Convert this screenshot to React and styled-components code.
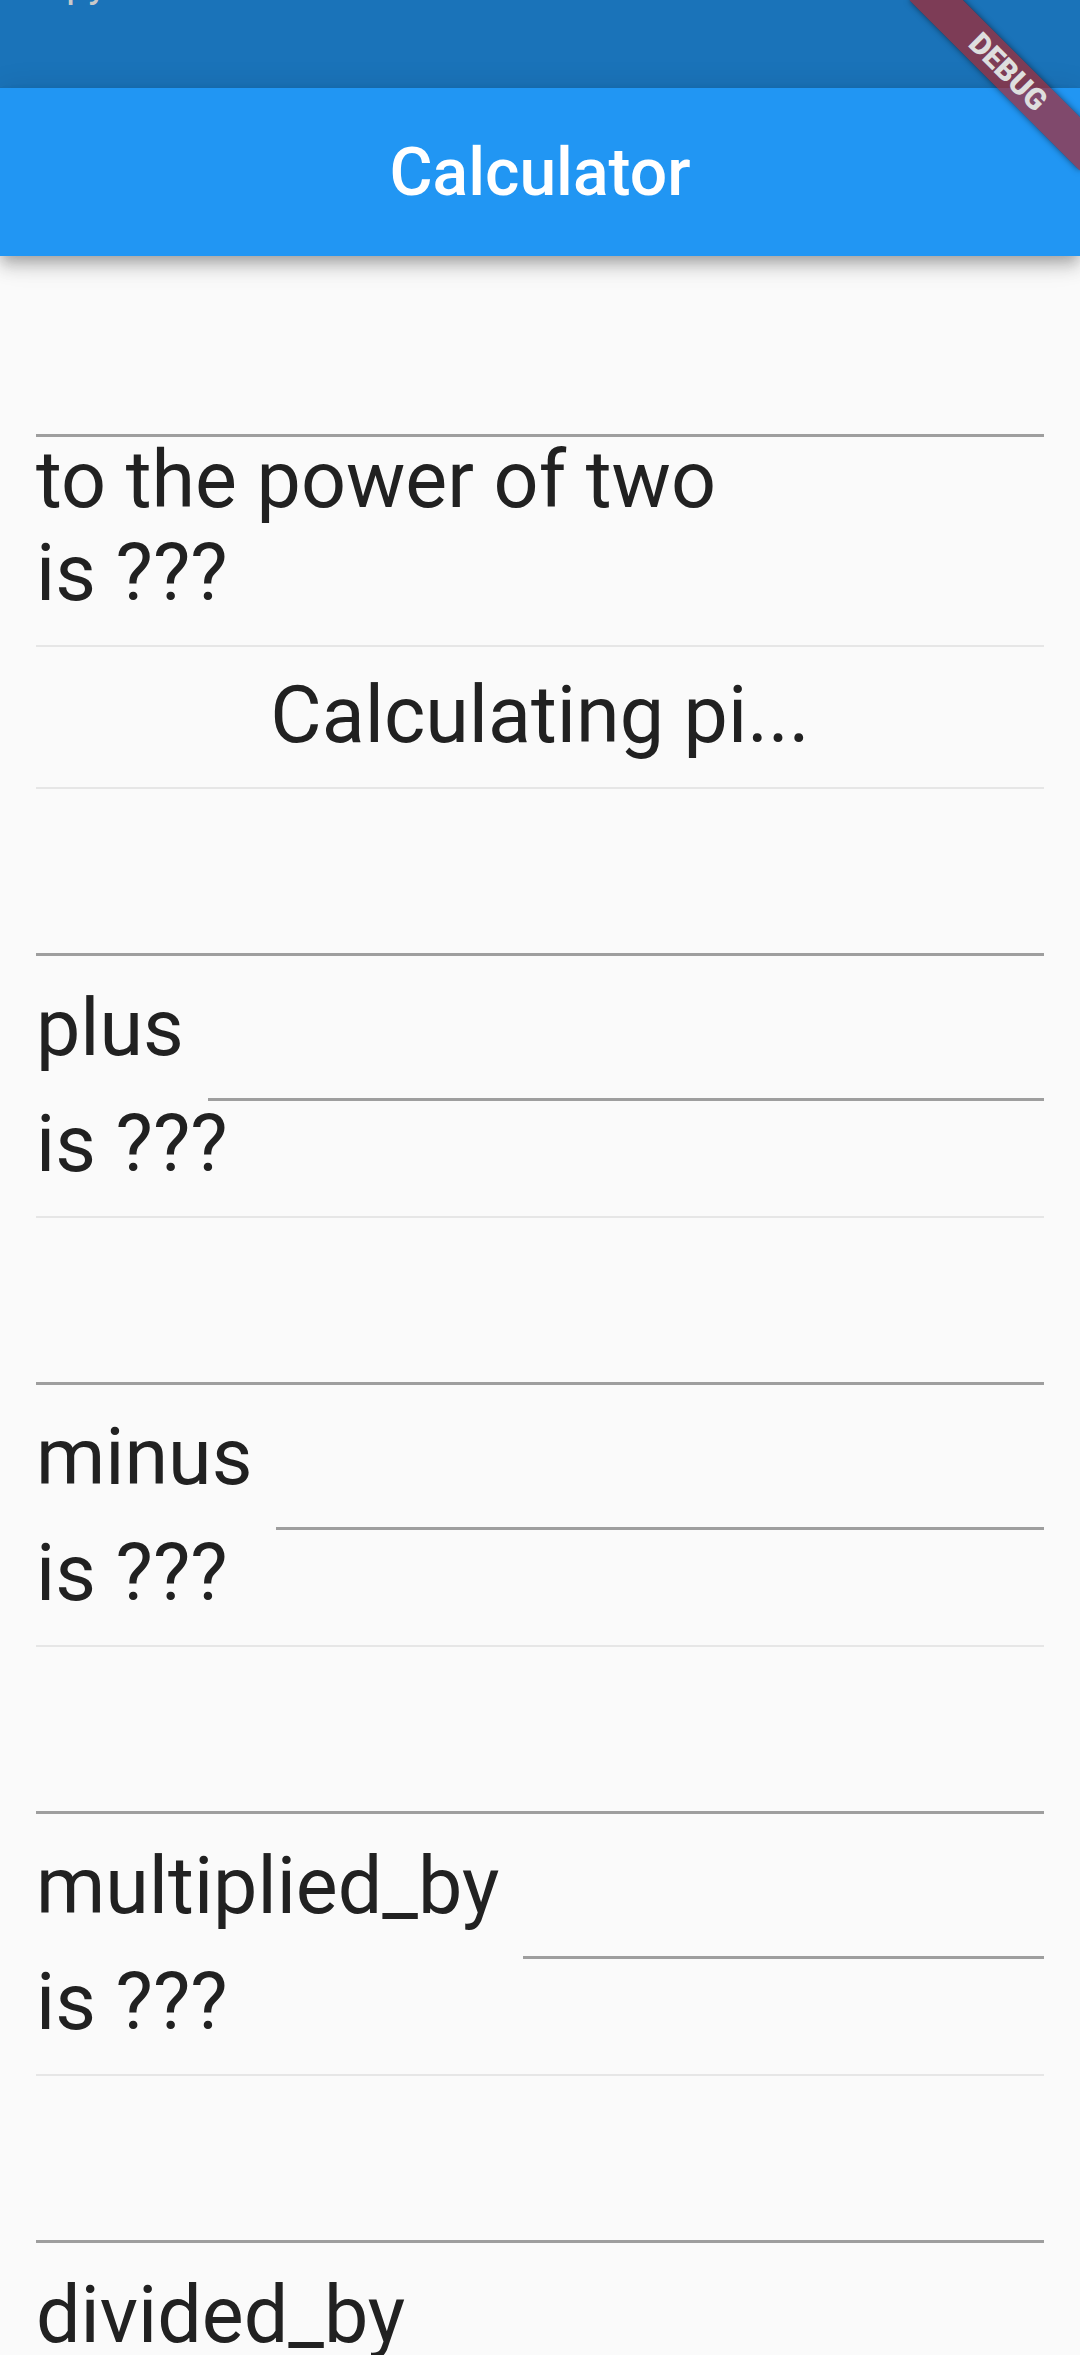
import React from "react";
import styled, { createGlobalStyle } from "styled-components";

const GlobalStyle = createGlobalStyle`
  html, body {
    margin: 0;
    padding: 0;
    background: #fafafa;
  }
  body {
    font-family: Roboto, "Noto Sans", "Liberation Sans", sans-serif;
    -webkit-font-smoothing: antialiased;
  }
`;

const Screen = styled.div`
  position: relative;
  width: 1080px;
  height: 2355px;
  overflow: hidden;
  background: #fafafa;
  display: flex;
  flex-direction: column;
`;

const StatusBar = styled.div`
  flex: none;
  height: 88px;
  background: #1a73b9;
  display: flex;
  align-items: flex-start;
  padding-left: 66px;
  overflow: hidden;
`;

const StatusText = styled.span`
  font: 400 40px/40px Roboto, sans-serif;
  color: #c9c9c9;
  margin-top: -36px;
`;

const AppBar = styled.header`
  flex: none;
  position: relative;
  z-index: 1;
  height: 168px;
  background: #2196f3;
  display: flex;
  align-items: center;
  justify-content: center;
  box-shadow: 0 6px 12px -3px rgba(0, 0, 0, 0.2),
    0 12px 15px 0 rgba(0, 0, 0, 0.14), 0 3px 30px 0 rgba(0, 0, 0, 0.12);
`;

const Title = styled.h1`
  margin: 0;
  font: 500 66px Roboto, sans-serif;
  color: #ffffff;
`;

const Body = styled.main`
  flex: none;
  padding: 36px 36px 0;
  display: flex;
  flex-direction: column;
`;

const Field = styled.div`
  flex: ${(p) => (p.$grow ? "1 1 auto" : "none")};
  height: 145px;
  box-shadow: inset 0 -3px 0 #9e9e9e;
`;

const Label = styled.div`
  flex: none;
  font-size: 79px;
  line-height: 93px;
  font-weight: 400;
  color: #212121;
  white-space: nowrap;
  text-align: ${(p) => (p.$center ? "center" : "left")};
  margin-top: ${(p) => (p.$afterField ? "-3px" : "0")};
`;

const OperandRow = styled.div`
  display: flex;
  align-items: center;
  gap: 24px;
`;

const Divider = styled.div`
  flex: none;
  height: 2px;
  margin: 25px 0 22px;
  background: #e6e6e6;
`;

const Banner = styled.div`
  position: absolute;
  z-index: 5;
  left: 888px;
  top: 53px;
  width: 240px;
  height: 38px;
  transform: rotate(45deg);
  background: rgba(183, 28, 28, 0.63);
  box-shadow: 0 0 6px rgba(0, 0, 0, 0.5);
  display: flex;
  align-items: center;
  justify-content: center;
`;

const BannerText = styled.span`
  font: 900 30px/1 Roboto, sans-serif;
  color: #dedede;
`;

const operations = ["plus", "minus", "multiplied_by", "divided_by"];

function BinaryOperation({ name }) {
  return (
    <>
      <Field />
      <OperandRow>
        <Label>{name}</Label>
        <Field $grow />
      </OperandRow>
      <Label $afterField>is ???</Label>
      <Divider />
    </>
  );
}

export default function App() {
  return (
    <>
      <GlobalStyle />
      <Screen>
        <StatusBar>
          <StatusText>py</StatusText>
        </StatusBar>
        <AppBar>
          <Title>Calculator</Title>
        </AppBar>
        <Body>
          <Field />
          <Label $afterField>to the power of two</Label>
          <Label>is ???</Label>
          <Divider />
          <Label $center>Calculating pi...</Label>
          <Divider />
          {operations.map((op) => (
            <BinaryOperation key={op} name={op} />
          ))}
        </Body>
        <Banner>
          <BannerText>DEBUG</BannerText>
        </Banner>
      </Screen>
    </>
  );
}
